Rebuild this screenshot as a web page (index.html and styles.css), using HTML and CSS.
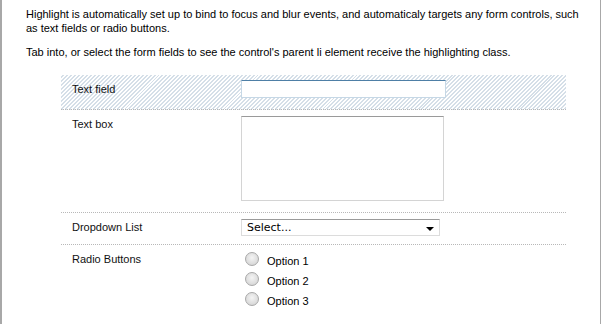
FILE: index.html
```html
<!DOCTYPE html>
<html lang="en">
<head>
  <meta charset="UTF-8" />
  <title>Highlight</title>
  <link rel="stylesheet" href="styles.css">
</head>
<body>
  <div class="page">
    <p>Highlight is automatically set up to bind to focus and blur events, and automaticaly targets any form controls, such as text fields or radio buttons.</p>
    <p>Tab into, or select the form fields to see the control's parent li element receive the highlighting class.</p>

    <ul class="form-list">
      <li class="row highlight">
        <label class="field-label" for="text-field">Text field</label>
        <input class="text-input focused" type="text" id="text-field" />
      </li>
      <li class="row">
        <label class="field-label" for="text-box">Text box</label>
        <textarea class="text-area" id="text-box"></textarea>
      </li>
      <li class="row short">
        <label class="field-label" for="dropdown">Dropdown List</label>
        <div class="select-box" id="dropdown">
          <span>Select...</span>
          <span class="arrow"></span>
        </div>
      </li>
      <li class="row tall">
        <span class="field-label">Radio Buttons</span>
        <div class="radio-group">
          <label class="radio"><span class="dot"></span>Option 1</label>
          <label class="radio"><span class="dot"></span>Option 2</label>
          <label class="radio"><span class="dot"></span>Option 3</label>
        </div>
      </li>
    </ul>
  </div>
</body>
</html>
```

FILE: styles.css
```css
body {
  margin: 0;
  padding: 0;
  background: #fff;
  font-family: 'Liberation Sans', Arial, sans-serif;
  font-size: 11px;
  color: #000;
}

.page {
  width: 601px;
  height: 324px;
  border-left: 2px solid #a8a8a8;
  border-right: 1px solid #a8a8a8;
  padding: 7px 0 0 24px;
  box-sizing: border-box;
  overflow: hidden;
}

.page p {
  margin: 0 0 10px;
  line-height: 14px;
  width: 556px;
}

.form-list {
  list-style: none;
  margin: 16px 0 0 35px;
  padding: 0;
  width: 505px;
}

.row {
  display: flex;
  padding: 5px 0 11px 11px;
  border-bottom: 1px dotted #b8b8b8;
}

.row.short {
  padding-bottom: 8px;
}

.row.tall {
  padding-bottom: 24px;
}

.row.highlight {
  background: repeating-linear-gradient(135deg, #fff 0 1.4px, #d5dfe8 1.4px 2.8px);
}

.field-label {
  width: 169px;
  flex-shrink: 0;
  padding-top: 3px;
  color: #111;
}

.text-input {
  width: 205px;
  height: 18px;
  box-sizing: border-box;
  border: 1px solid #c6d8e6;
  border-top-color: #4e7fa6;
  margin: 0;
  padding: 0;
  background: #fff;
}

.text-area {
  width: 203px;
  height: 85px;
  box-sizing: border-box;
  border: 1px solid #d4d4d4;
  border-top-color: #9a9a9a;
  margin: 1px 0 0;
  padding: 0;
  resize: none;
  background: #fff;
}

.select-box {
  width: 199px;
  height: 17px;
  box-sizing: border-box;
  margin-top: 1px;
  border: 1px solid #dcdcdc;
  border-top-color: #9a9a9a;
  display: flex;
  align-items: center;
  justify-content: space-between;
  padding: 0 5px;
  font-family: 'DejaVu Sans', Verdana, sans-serif;
  font-size: 11px;
  color: #000;
}

.arrow {
  width: 0;
  height: 0;
  border-left: 4px solid transparent;
  border-right: 4px solid transparent;
  border-top: 4px solid #000;
  margin-top: 3px;
}

.radio-group {
  display: flex;
  flex-direction: column;
  gap: 6px;
  padding-left: 4px;
  padding-top: 4px;
}

.radio {
  display: flex;
  align-items: center;
  height: 14px;
}

.dot {
  width: 12px;
  height: 12px;
  border-radius: 50%;
  border: 1px solid #a8a8a8;
  background: radial-gradient(circle at 50% 40%, #f4f4f4, #cfcfcf);
  margin-right: 8px;
  margin-top: -4px;
}
```
